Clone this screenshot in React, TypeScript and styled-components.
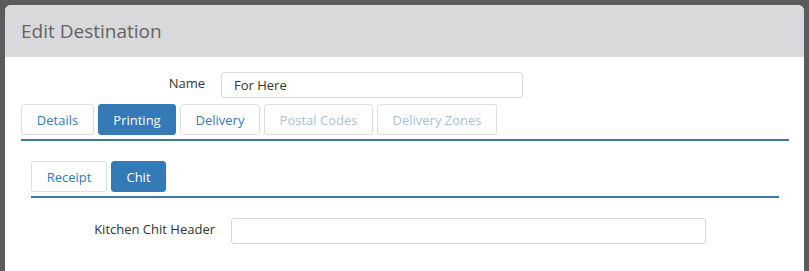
import React from "react"
import styled, { createGlobalStyle } from "styled-components"

const GlobalStyle = createGlobalStyle`
  html, body {
    margin: 0;
    padding: 0;
    background: #5b5b5b;
    font-family: "Open Sans", "Noto Sans", sans-serif;
    overflow: hidden;
  }
`

const Backdrop = styled.div`
  padding: 5px 5px 0 5px;
  height: 271px;
  box-sizing: border-box;
`

const Dialog = styled.div`
  width: 799px;
  height: 100%;
  background: #fff;
  border-radius: 6px 6px 0 0;
  overflow: hidden;
`

const Header = styled.div`
  height: 52px;
  background: #d9d9db;
  display: flex;
  align-items: center;
  padding-left: 16px;

  h1 {
    margin: 0;
    font-size: 19px;
    font-weight: 400;
    color: #636363;
  }
`

const Body = styled.div`
  padding: 15px 16px 0 16px;
`

const FieldRow = styled.div<{ $labelWidth: number; $inputWidth: number }>`
  display: flex;
  align-items: center;
  gap: 16px;

  label {
    width: ${(p) => p.$labelWidth}px;
    text-align: right;
    font-size: 13px;
    color: #333;
    margin-top: -4px;
  }

  input {
    width: ${(p) => p.$inputWidth}px;
    height: 26px;
    box-sizing: border-box;
    border: 1px solid #d6d6d6;
    border-radius: 3px;
    padding: 0 12px;
    font-family: inherit;
    font-size: 13px;
    color: #333;
    outline: none;
  }
`

const TabBar = styled.div<{ $lineColor: string; $lineWidth: number }>`
  display: flex;
  gap: 4px;
  width: ${(p) => p.$lineWidth}px;
  padding-bottom: 4px;
  border-bottom: 2px solid ${(p) => p.$lineColor};
`

const Tab = styled.button<{ $active?: boolean; $width: number }>`
  width: ${(p) => p.$width}px;
  height: 31px;
  box-sizing: border-box;
  border: 1px solid ${(p) => (p.$active ? "#337ab7" : "#dedede")};
  border-radius: 3px;
  background: ${(p) => (p.$active ? "#337ab7" : "#fff")};
  color: ${(p) => (p.$active ? "#fff" : p.disabled ? "#a9c1d4" : "#337ab7")};
  font-family: inherit;
  font-size: 13px;
  padding: 0;
  cursor: ${(p) => (p.disabled ? "default" : "pointer")};
`

const Section = styled.div<{ $top: number; $indent?: number }>`
  margin-top: ${(p) => p.$top}px;
  padding-left: ${(p) => p.$indent ?? 0}px;
`

const mainTabs = [
  { label: "Details", width: 73 },
  { label: "Printing", width: 78, active: true },
  { label: "Delivery", width: 80 },
  { label: "Postal Codes", width: 109, disabled: true },
  { label: "Delivery Zones", width: 120, disabled: true },
]

const subTabs = [
  { label: "Receipt", width: 76 },
  { label: "Chit", width: 55, active: true },
]

export default function App() {
  return (
    <>
      <GlobalStyle />
      <Backdrop>
        <Dialog>
          <Header>
            <h1>Edit Destination</h1>
          </Header>
          <Body>
            <FieldRow $labelWidth={184} $inputWidth={302}>
              <label>Name</label>
              <input defaultValue="For Here" />
            </FieldRow>
            <Section $top={6}>
              <TabBar $lineColor="#3f7d8c" $lineWidth={768}>
                {mainTabs.map((t) => (
                  <Tab key={t.label} $width={t.width} $active={t.active} disabled={t.disabled}>
                    {t.label}
                  </Tab>
                ))}
              </TabBar>
            </Section>
            <Section $top={20} $indent={10}>
              <TabBar $lineColor="#337ab7" $lineWidth={748}>
                {subTabs.map((t) => (
                  <Tab key={t.label} $width={t.width} $active={t.active}>
                    {t.label}
                  </Tab>
                ))}
              </TabBar>
            </Section>
            <Section $top={20}>
              <FieldRow $labelWidth={194} $inputWidth={475}>
                <label>Kitchen Chit Header</label>
                <input />
              </FieldRow>
            </Section>
          </Body>
        </Dialog>
      </Backdrop>
    </>
  )
}
